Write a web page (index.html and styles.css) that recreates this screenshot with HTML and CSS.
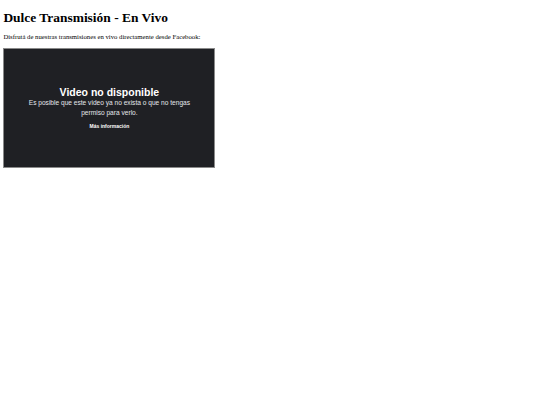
FILE: index.html
```html
<!DOCTYPE html>
<html lang="es">
<head>
<meta charset="utf-8">
<title>Dulce Transmisión - En Vivo</title>
<link rel="stylesheet" href="styles.css">
</head>
<body>
<h1 class="title">Dulce Transmisión - En Vivo</h1>
<p class="intro">Disfrutá de nuestras transmisiones en vivo directamente desde Facebook:</p>
<div class="player">
  <div class="message">
    <div class="msg-title">Video no disponible</div>
    <div class="msg-text">Es posible que este video ya no exista o que no tengas permiso para verlo.</div>
    <div class="msg-link">Más información</div>
  </div>
</div>
</body>
</html>
```
FILE: styles.css
```css
html, body {
  background: #ffffff;
}
body {
  margin: 3.4px;
  font-family: "Liberation Serif", "Times New Roman", serif;
  color: #000;
}
.title {
  font-size: 13.45px;
  font-weight: bold;
  margin: 7px 0 7px;
}
.intro {
  font-size: 6.72px;
  margin: 0 0 7.7px;
}
.player {
  width: 210px;
  height: 117.6px;
  background: #1f2024;
  border: 0.84px solid #8a8a8a;
  display: flex;
  align-items: center;
  justify-content: center;
}
.message {
  width: 172px;
  text-align: center;
  font-family: "Liberation Sans", Arial, sans-serif;
  color: #e4e6eb;
  margin-top: -1px;
}
.msg-title {
  font-size: 10.5px;
  font-weight: bold;
  color: #ffffff;
  line-height: 12px;
}
.msg-text {
  font-size: 6.6px;
  line-height: 9.4px;
}
.msg-link {
  font-size: 5px;
  font-weight: bold;
  margin-top: 5.5px;
  color: #ffffff;
}
```
